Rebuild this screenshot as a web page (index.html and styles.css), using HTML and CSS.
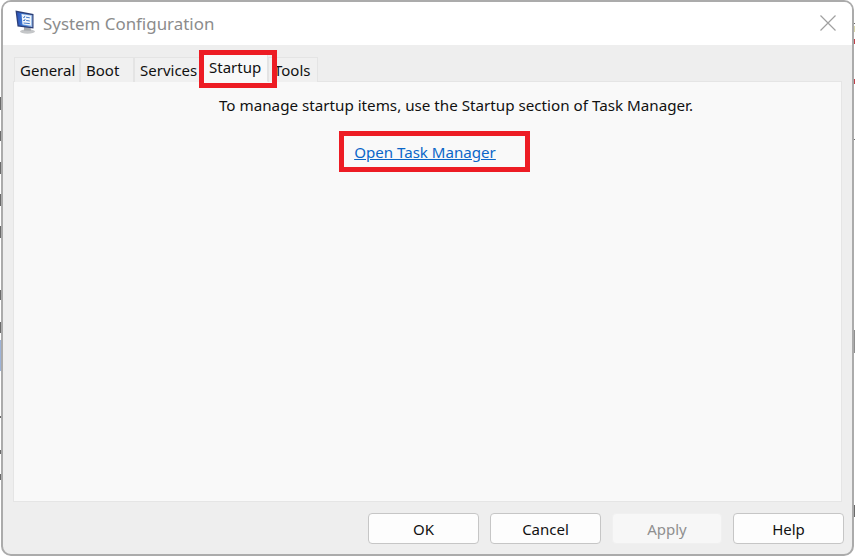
FILE: index.html
```html
<!DOCTYPE html>
<html lang="en">
<head>
<meta charset="utf-8">
<title>System Configuration</title>
<link rel="stylesheet" href="styles.css">
</head>
<body>
<div class="desktop">
  <span class="frag frag-l1"></span>
  <span class="frag frag-l2"></span>
  <span class="frag frag-l3"></span>
  <span class="frag frag-l4"></span>
  <span class="frag frag-l5"></span>
  <span class="frag frag-l6"></span>
  <span class="frag frag-l7"></span>
  <span class="frag frag-l8"></span>
  <span class="frag frag-l9"></span>
  <span class="frag frag-l10"></span>
  <span class="edge-select"></span>
  <span class="frag frag-r1"></span>
  <span class="frag frag-r2"></span>
  <span class="frag frag-r3"></span>
  <span class="edge-beige"></span>
  <span class="edge-red red-a"></span>
  <span class="edge-red red-b"></span>
  <span class="edge-bar"></span>
  <div class="window">
    <header class="titlebar">
      <svg class="app-icon" width="24" height="24" viewBox="0 0 24 24" aria-hidden="true">
        <defs>
          <linearGradient id="scr" x1="0" y1="0" x2="1" y2="0">
            <stop offset="0" stop-color="#2b4fb4"/>
            <stop offset=".45" stop-color="#3f82dc"/>
            <stop offset="1" stop-color="#a9c8ee"/>
          </linearGradient>
        </defs>
        <ellipse cx="12.5" cy="21.5" rx="7.5" ry="2.2" fill="#c4c6c8"/>
        <path d="M9 16.5 L15.5 17 L16 20.8 L9 20.5 Z" fill="#a8abae"/>
        <path d="M0.5 0.5 L18.5 4 L18.5 18.5 L2.5 16.5 Z" fill="#2c3f78"/>
        <path d="M2 2.2 L17.3 5.2 L17.3 17 L3.6 15.3 Z" fill="url(#scr)"/>
        <path d="M6.5 4 L16 5.8 L16 15.6 L7.5 14.6 Z" fill="#f2f6fb"/>
        <path d="M8 6.8 L9 7.8 L10 5.8 M11 7.2 L14.8 7.8 M8.2 10 L9.2 11 L10.2 9 M11.2 10.4 L14.8 11 M8.6 13 L14.8 13.6" stroke="#2f6cc4" stroke-width=".9" fill="none"/>
      </svg>
      <span class="title">System Configuration</span>
      <svg class="close" width="16" height="16" viewBox="0 0 16 16" aria-hidden="true">
        <path d="M.5 .5 L15.5 15.5 M15.5 .5 L.5 15.5" stroke="#a0a0a0" stroke-width="1.2" fill="none"/>
      </svg>
    </header>
    <div class="body">
      <nav class="tabs">
        <span class="tab tab-general">General</span>
        <span class="tab tab-boot">Boot</span>
        <span class="tab tab-services">Services</span>
        <span class="tab tab-startup">Startup</span>
        <span class="tab tab-tools">Tools</span>
      </nav>
      <main class="panel">
        <p class="message">To manage startup items, use the Startup section of Task Manager.</p>
        <a class="link" href="#">Open Task Manager</a>
      </main>
      <footer class="actions">
        <button class="btn" type="button">OK</button>
        <button class="btn" type="button">Cancel</button>
        <button class="btn" type="button" disabled>Apply</button>
        <button class="btn" type="button">Help</button>
      </footer>
    </div>
  </div>
  <span class="mark mark-tab"></span>
  <span class="mark mark-link"></span>
</div>
</body>
</html>
```
FILE: styles.css
```css
* { box-sizing: border-box; }
html, body { margin: 0; padding: 0; }
body {
  width: 855px;
  height: 556px;
  overflow: hidden;
  background: #fff;
  font-family: "Noto Sans", "Open Sans", sans-serif;
}
.desktop {
  position: relative;
  width: 855px;
  height: 556px;
  padding: 0 1px;
  overflow: hidden;
}
.window {
  width: 853px;
  height: 556px;
  border: 2px solid #ababab;
  border-radius: 10px;
  overflow: hidden;
  background: #eee;
  display: flex;
  flex-direction: column;
}
.titlebar {
  height: 43px;
  background: #fff;
  display: flex;
  align-items: center;
  padding: 0 16px 0 12px;
  flex: none;
}
.app-icon { flex: none; margin-top: -3px; }
.title {
  margin-left: 4px;
  margin-top: -1px;
  font-size: 16.9px;
  color: #8c8c8c;
  flex: 1;
}
.close { flex: none; margin-top: -1px; }
.body {
  flex: 1;
  display: flex;
  flex-direction: column;
  padding: 0 8px 10px 10px;
}
.tabs {
  height: 37px;
  flex: none;
  display: flex;
  align-items: flex-end;
  padding-left: 1px;
  margin-bottom: -1px;
  position: relative;
  z-index: 1;
}
.tab {
  height: 25px;
  background: #f0f0f0;
  border: 1px solid #e4e4e4;
  border-bottom: 0;
  font-size: 15px;
  line-height: 24px;
  color: #111;
  padding-left: 5px;
  white-space: nowrap;
}
.tab-general { width: 66px; }
.tab-boot { width: 54px; }
.tab-services { width: 66px; }
.tab-startup {
  width: 68px;
  height: 30px;
  line-height: 28px;
  padding-left: 8px;
  background: #f9f9f9;
  border-bottom: 1px solid #f9f9f9;
}
.tab-tools { width: 50px; padding-left: 5px; }
.panel {
  flex: 1;
  margin-right: 2px;
  background: #f9f9f9;
  border: 1px solid #e5e5e5;
  display: flex;
  flex-direction: column;
  align-items: center;
  padding-left: 57px;
}
.message {
  margin: 11px 0 0;
  font-size: 15.2px;
  line-height: 24px;
  color: #111;
  white-space: nowrap;
}
.link {
  margin: 23px 0 0 -62px;
  font-size: 15.1px;
  line-height: 24px;
  color: #0b66c8;
  white-space: nowrap;
}
.actions {
  display: flex;
  flex: none;
  justify-content: flex-end;
  gap: 11px;
  margin-top: 11px;
}
.btn {
  width: 111px;
  height: 31px;
  padding: 1px 0 0;
  background: #fdfdfd;
  border: 1px solid #c6c6c6;
  border-radius: 4px;
  font: 15px/1 "Noto Sans", "Open Sans", sans-serif;
  color: #111;
}
.btn:disabled {
  width: 110px;
  background: #f7f7f7;
  border-color: #f0f0f0;
  color: #8f8f8f;
}
.mark {
  position: absolute;
  border: 5px solid #ed1c24;
  z-index: 5;
}
.mark-tab { left: 199px; top: 50px; width: 78px; height: 38px; }
.mark-link { left: 339px; top: 131px; width: 191px; height: 41px; }
.frag {
  position: absolute;
  width: 1px;
  background: #6a6a6a;
}
.frag-l1 { left: 0; top: 97px; height: 13px; }
.frag-l2 { left: 0; top: 131px; height: 10px; }
.frag-l3 { left: 0; top: 162px; height: 12px; }
.frag-l4 { left: 0; top: 194px; height: 12px; }
.frag-l5 { left: 0; top: 226px; height: 12px; }
.frag-l6 { left: 0; top: 290px; height: 10px; }
.frag-l7 { left: 0; top: 322px; height: 11px; }
.frag-l8 { left: 0; top: 416px; height: 2px; }
.frag-l9 { left: 0; top: 450px; height: 4px; }
.frag-l10 { left: 0; top: 474px; height: 6px; }
.frag-r1 { right: 0; top: 23px; height: 1px; }
.frag-r2 { right: 0; top: 139px; height: 1px; }
.frag-r3 { right: 0; top: 505px; height: 12px; }
.edge-select {
  position: absolute;
  left: 0;
  top: 340px;
  width: 1px;
  height: 31px;
  background: #9db3d8;
}
.edge-beige {
  position: absolute;
  right: 0;
  top: 26px;
  width: 1px;
  height: 6px;
  background: #d8d6a8;
}
.edge-red {
  position: absolute;
  right: 0;
  width: 1px;
  height: 5px;
  background: #c0404a;
}
.red-a { top: 39px; }
.red-b { top: 79px; }
.edge-bar {
  position: absolute;
  right: 0;
  top: 330px;
  width: 1px;
  height: 23px;
  background: #8f8f8f;
}
```
